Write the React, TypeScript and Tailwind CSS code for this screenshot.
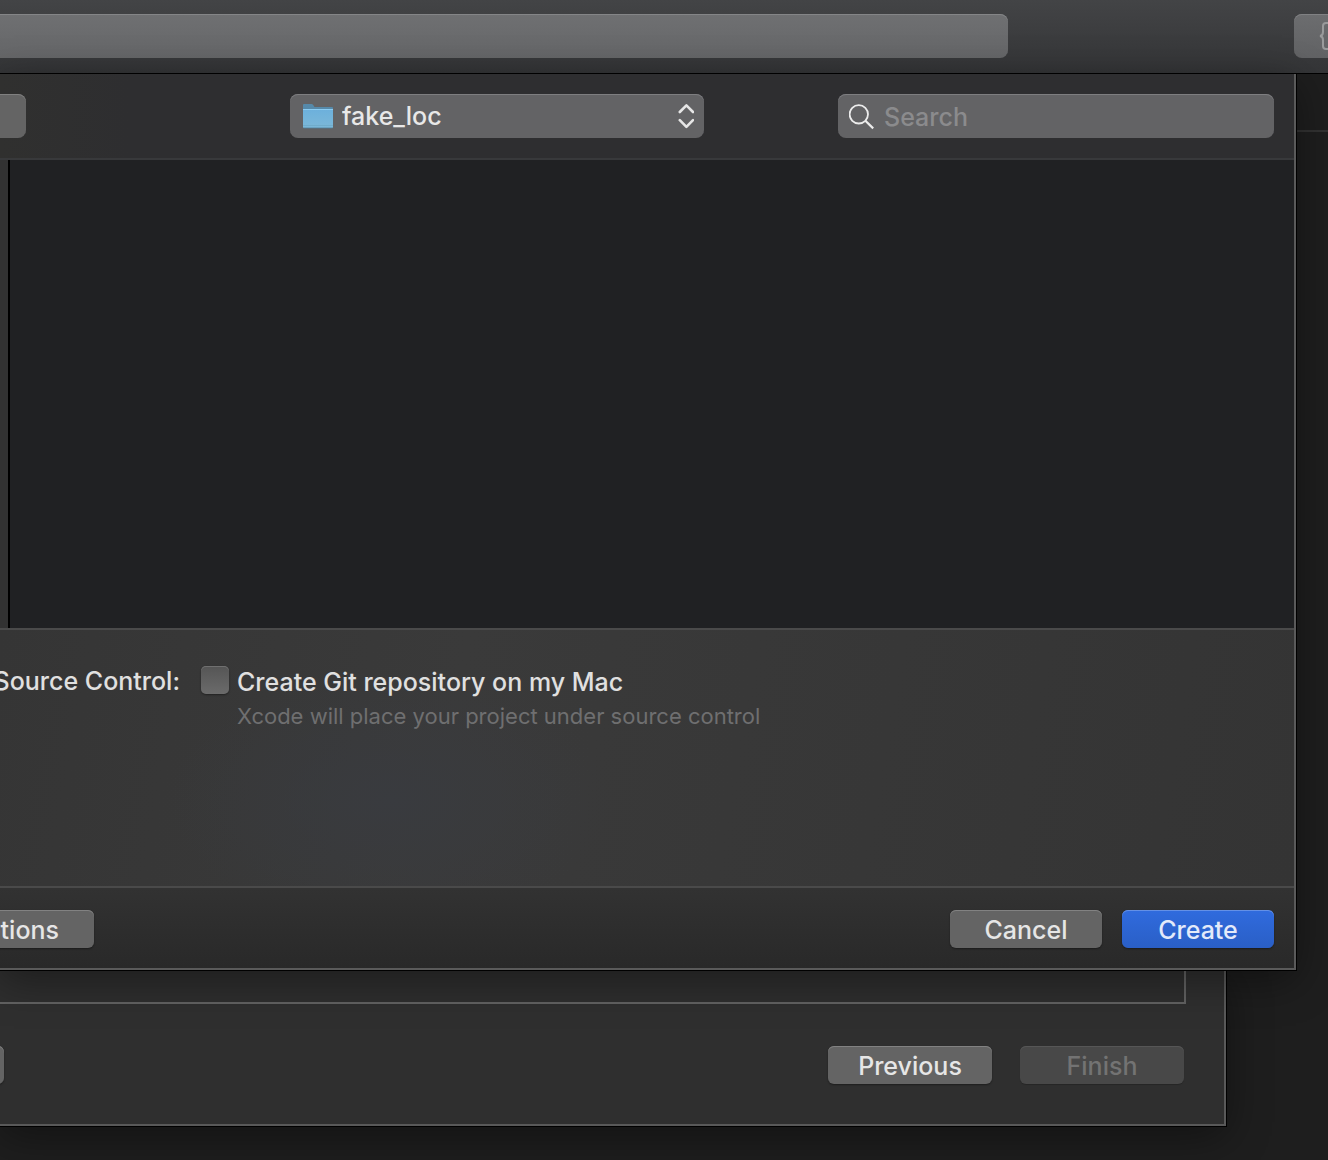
import { useState } from "react";
import type { ButtonHTMLAttributes } from "react";
import clsx from "clsx";

interface PushButtonProps extends ButtonHTMLAttributes<HTMLButtonElement> {
  primary?: boolean;
}

function PushButton({ primary, disabled, className, ...rest }: PushButtonProps) {
  return (
    <button
      type="button"
      disabled={disabled}
      className={clsx(
        "h-[38px] shrink-0 rounded-md pt-0.5 text-[25px] leading-none font-medium",
        primary && "bg-linear-to-b from-[#306bde] to-[#2a5fc6] text-[#e3eafa] shadow-[inset_0_1px_0_#6490e6,0_1px_2px_rgba(0,0,0,0.4)]",
        !primary && !disabled && "bg-[#646464] text-[#e6e6e6] shadow-[inset_0_1px_0_#828282,0_1px_2px_rgba(0,0,0,0.4)]",
        disabled && "bg-[#484848] text-[#737373] shadow-[inset_0_1px_0_#565656,0_1px_1px_rgba(0,0,0,0.2)]",
        className,
      )}
      {...rest}
    />
  );
}

function FolderIcon() {
  return (
    <svg width="30" height="26" viewBox="0 0 30 26" aria-hidden="true">
      <defs>
        <linearGradient id="folder" x1="0" y1="0" x2="0" y2="1">
          <stop offset="0" stopColor="#6cb0dc" />
          <stop offset="1" stopColor="#7cb8d8" />
        </linearGradient>
      </defs>
      <path d="M0 2Q0 1 1 1H8.5Q9.5 1 10.2 2L11.5 4H29Q30 4 30 5V9H0Z" fill="#5689a9" />
      <path d="M0 6H30V24Q30 25 29 25H1Q0 25 0 24Z" fill="url(#folder)" />
      <path d="M0 6.5H30" stroke="#8bccf2" />
      <path d="M0 22.5H30" stroke="#70accb" />
      <path d="M.5 25H29.5" stroke="#4f7f9b" strokeWidth=".8" />
    </svg>
  );
}

function Chevrons() {
  return (
    <svg width="16" height="26" viewBox="0 0 16 26" fill="none" stroke="#e6e6e6" strokeWidth="2.6" strokeLinecap="round" strokeLinejoin="round" aria-hidden="true">
      <path d="M1.8 9L8.4 2.4L15 9M1.8 17.2L8.4 23.8L15 17.2" />
    </svg>
  );
}

function SearchIcon() {
  return (
    <svg width="26" height="28" viewBox="0 0 26 28" fill="none" stroke="#ececec" aria-hidden="true">
      <circle cx="9.8" cy="12.3" r="9.2" strokeWidth="1.8" />
      <path d="M16.4 18.8L24.2 26.4" strokeWidth="2.2" />
    </svg>
  );
}

function BracesIcon() {
  return (
    <svg width="30" height="30" viewBox="0 0 30 30" fill="none" stroke="#999a9b" strokeWidth="2" aria-hidden="true">
      <path d="M10 2H8Q5 2 5 5V11Q5 14.5 2 15Q5 15.5 5 19V25Q5 28 8 28H10" />
      <path d="M20 2H22Q25 2 25 5V11Q25 14.5 28 15Q25 15.5 25 19V25Q25 28 22 28H20" />
    </svg>
  );
}

function Toolbar() {
  return (
    <header className="flex h-[74px] border-b border-black bg-linear-to-b from-[#434446] to-[#343537] pt-3.5">
      <div className="h-11 flex-1 rounded-r-lg bg-linear-to-b from-[#6f7072] to-[#656668] shadow-[inset_0_1px_0_#848587]" />
      <div className="ml-[286px] w-[34px]">
        <button
          type="button"
          aria-label="Library"
          className="flex h-11 w-20 items-center rounded-lg bg-linear-to-b from-[#6c6d6f] to-[#616264] pl-6 shadow-[inset_0_1px_0_#808183]"
        >
          <BracesIcon />
        </button>
      </div>
    </header>
  );
}

function SaveSheet() {
  const [git, setGit] = useState(false);
  const [query, setQuery] = useState("");

  return (
    <section className="relative z-10 mr-8 border-r-2 border-b-2 border-[#5a5a5a] bg-[#2e2e30] shadow-[0_0_0_1px_#000,0_10px_40px_rgba(0,0,0,0.4)]">
      <div className="flex h-[86px] items-start border-b-2 border-[#38393b] bg-linear-to-r from-[#30302f] to-[#2e2e30] to-10% pt-5 pr-5">
        <button type="button" aria-label="View options" className="h-11 w-[26px] rounded-r-lg bg-[#646464] shadow-[inset_0_1px_0_#808080]" />
        <div className="relative ml-[264px] w-[414px]">
          <select
            aria-label="Location"
            className="h-11 w-full appearance-none rounded-lg bg-[#636365] pt-0.5 pl-[52px] text-[25px] font-medium text-[#e8e8e8] shadow-[inset_0_1px_0_#7e7e80]"
          >
            <option>fake_loc</option>
          </select>
          <span className="pointer-events-none absolute inset-y-0 left-[13px] flex items-center"><FolderIcon /></span>
          <span className="pointer-events-none absolute inset-y-0 right-[10px] flex items-center"><Chevrons /></span>
        </div>
        <div className="relative ml-auto w-[436px]">
          <input
            type="search"
            aria-label="Search"
            placeholder="Search"
            value={query}
            onChange={(e) => setQuery(e.target.value)}
            className="h-11 w-full rounded-lg bg-[#636365] pt-0.5 pr-3 pl-[46px] text-[25px] font-medium text-[#e8e8e8] shadow-[inset_0_1px_0_#7e7e80] placeholder:text-[#8b8b8d]"
          />
          <span className="pointer-events-none absolute inset-y-0 left-[11px] flex items-center"><SearchIcon /></span>
        </div>
      </div>

      <div className="flex h-[468px] bg-[#202123]">
        <div className="w-2.5 border-r-2 border-black bg-[#323232]" />
      </div>

      <div className="h-[260px] border-y-2 border-[#4a4a4a] bg-[radial-gradient(ellipse_220px_130px_at_390px_170px,#393b3f,transparent),linear-gradient(100deg,#353535,#3a3a3a_35%,#343434)] pt-9">
        <div className="flex items-start gap-[21px]">
          <div className="flex w-[180px] shrink-0 justify-end text-[25px] leading-[30px] font-medium whitespace-nowrap text-[#e0e0e0]">Source Control:</div>
          <div className="flex items-start gap-2">
            <input
              id="git"
              type="checkbox"
              checked={git}
              onChange={(e) => setGit(e.target.checked)}
              className="size-7 appearance-none rounded-[5px] bg-linear-to-b from-[#555555] to-[#6b6b6b] shadow-[inset_0_1px_0_#707070,0_1px_2px_rgba(0,0,0,0.4)] checked:from-[#306bde] checked:to-[#2a5fc6]"
            />
            <div>
              <label htmlFor="git" className="block text-[25px] leading-8 font-medium text-[#e0e0e0]">Create Git repository on my Mac</label>
              <p className="mt-0.5 text-[22px] leading-8 text-[#6f6f70]">Xcode will place your project under source control</p>
            </div>
          </div>
        </div>
      </div>

      <div className="flex h-20 items-center bg-linear-to-b from-[#323232] to-[#292929] pt-0.5 pr-5">
        <div className="flex w-[94px] justify-end">
          <PushButton className="px-[35px]">Options</PushButton>
        </div>
        <PushButton className="ml-auto w-[152px]">Cancel</PushButton>
        <PushButton primary className="ml-5 w-[152px]">Create</PushButton>
      </div>
    </section>
  );
}

function WizardPanel() {
  return (
    <section className="mr-[102px] border-r-2 border-b-2 border-[#595959] bg-[#2f2f2f] pr-[38px] pb-10 shadow-[0_0_0_1px_#000,0_10px_40px_rgba(0,0,0,0.4)]">
      <div className="h-[34px] border-r-2 border-b-2 border-[#626262] bg-[#2e2e2e]" />
      <div className="mt-[42px] flex items-center pr-0.5">
        <div className="flex w-1 justify-end">
          <PushButton aria-label="Cancel" className="w-[164px]" />
        </div>
        <PushButton className="ml-auto w-[164px]">Previous</PushButton>
        <PushButton disabled className="ml-7 w-[164px]">Finish</PushButton>
      </div>
    </section>
  );
}

export default function App() {
  return (
    <div className="min-h-screen overflow-hidden bg-[#1e1e1e] font-['Inter',sans-serif]">
      <Toolbar />
      <main className="bg-[linear-gradient(#323232,#323232)] bg-[length:100%_2px] bg-[position:0_56px] bg-no-repeat">
        <SaveSheet />
        <WizardPanel />
      </main>
    </div>
  );
}
